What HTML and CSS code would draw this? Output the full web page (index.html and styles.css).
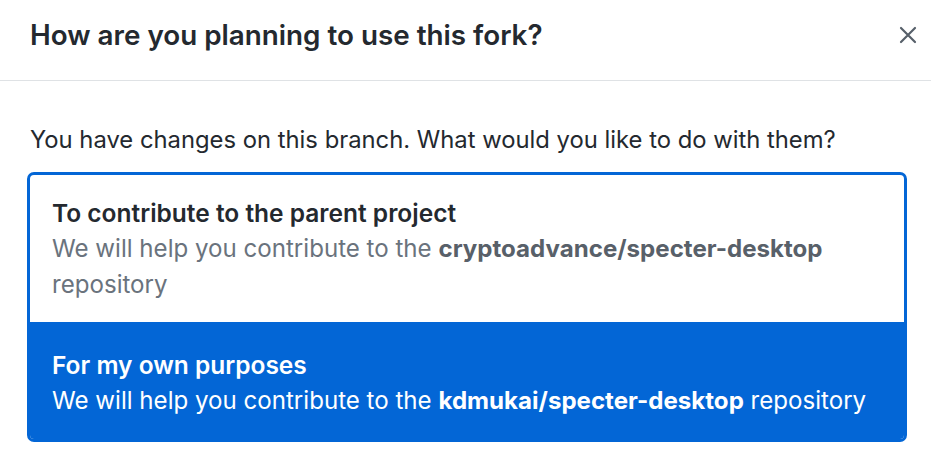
FILE: index.html
```html
<!DOCTYPE html>
<html>
<head>
<meta charset="utf-8">
<link rel="stylesheet" href="styles.css">
</head>
<body>
<div class="dialog">
  <div class="header">
    <h1 class="title">How are you planning to use this fork?</h1>
    <button class="close" aria-label="Close">
      <svg width="18" height="18" viewBox="0 0 18 18"><path d="M2 2L16 16M16 2L2 16" stroke="#57606a" stroke-width="2.2" stroke-linecap="round"/></svg>
    </button>
  </div>
  <div class="content">
    <p class="prompt">You have changes on this branch. What would you like to do with them?</p>
    <div class="choices">
      <div class="option">
        <div class="opt-title">To contribute to the parent project</div>
        <div class="opt-desc">We will help you contribute to the <strong>cryptoadvance/specter-desktop</strong> repository</div>
      </div>
      <div class="option selected">
        <div class="opt-title">For my own purposes</div>
        <div class="opt-desc">We will help you contribute to the <strong>kdmukai/specter-desktop</strong> repository</div>
      </div>
    </div>
  </div>
</div>
</body>
</html>
```
FILE: styles.css
```css
* { box-sizing: border-box; }
body {
  margin: 0;
  background: #fff;
  font-family: Inter, "Liberation Sans", sans-serif;
  color: #24292f;
}
.header {
  height: 81px;
  border-bottom: 1px solid #dfe2e5;
  display: flex;
  align-items: center;
  justify-content: space-between;
  padding: 0 12px 10px 30px;
}
.title {
  margin: 0;
  font-size: 27.8px;
  font-weight: 600;
  line-height: 36px;
}
.close {
  border: 0;
  background: none;
  padding: 0;
  width: 22px;
  height: 22px;
  display: flex;
  align-items: center;
  justify-content: center;
}
.content {
  padding: 0 24px 0 27px;
}
.prompt {
  margin: 41px 0 14px 3px;
  font-size: 23.8px;
  line-height: 36px;
}
.choices {
  width: 880px;
  border: 3px solid #0366d6;
  border-radius: 7px;
  overflow: hidden;
}
.option {
  padding: 20px 22px 19px;
  font-size: 24.1px;
  line-height: 36px;
}
.opt-title { font-weight: 600; font-size: 24.5px; }
.opt-desc { color: #6a737d; }
.opt-desc strong { color: #586069; font-weight: 700; }
.option.selected {
  background: #0366d6;
  color: #fff;
  padding: 25px 22px 20px;
}
.option.selected .opt-desc,
.option.selected .opt-desc strong { color: #fff; }
```
